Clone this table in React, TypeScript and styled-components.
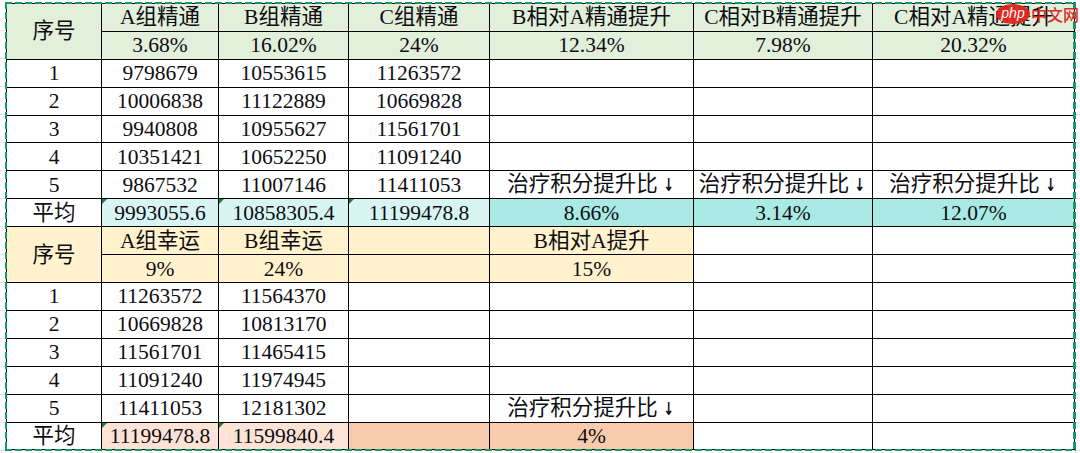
import React from "react";
import styled, { createGlobalStyle, css } from "styled-components";

const GlobalStyle = createGlobalStyle`
  html, body { margin: 0; padding: 0; background: #ffffff; }
  #root { width: 1080px; height: 453px; overflow: hidden; }
`;

const Page = styled.div`
  position: relative;
  width: 1080px;
  height: 453px;
  box-sizing: border-box;
  padding: 3px 0 0 6px;
  background-color: #fff;
  background-image: repeating-linear-gradient(
    180deg,
    transparent 0,
    transparent 27px,
    #e3e3e3 27px,
    #e3e3e3 28px
  );
  background-position: 0 3px;
  font-family: "Liberation Serif", "Noto Sans CJK SC", serif;
  color: #0d0d12;
`;

const Sheet = styled.table`
  border-collapse: collapse;
  table-layout: fixed;
  width: 1068px;
  background: #fff;
`;

const Row = styled.tr`
  height: 27.9px;
`;

type Tone = "white" | "green" | "cyanLight" | "cyan" | "yellow" | "peachLight" | "peach";

const tones: Record<Tone, string> = {
  white: "#ffffff",
  green: "#e2efda",
  cyanLight: "#d8f5f3",
  cyan: "#aaeae4",
  yellow: "#fff2cc",
  peachLight: "#fce3d5",
  peach: "#f8cbad",
};

const Cell = styled.td<{ $tone?: Tone; $mark?: boolean }>`
  position: relative;
  padding: 0;
  border: 1px solid #000;
  background: ${(p) => tones[p.$tone ?? "white"]};
  text-align: center;
  vertical-align: middle;
  font-size: 21.5px;
  line-height: 26px;
  white-space: nowrap;
  overflow: hidden;
  ${(p) =>
    p.$mark &&
    css`
      &::before {
        content: "";
        position: absolute;
        left: 0;
        top: 0;
        border-style: solid;
        border-width: 5px 5px 0 0;
        border-color: #1f7a3c transparent transparent transparent;
      }
    `}
`;

const Arrow = styled.span`
  display: inline-block;
  margin-left: 3px;
  font-family: "DejaVu Sans", sans-serif;
  font-size: 18px;
  font-weight: bold;
  transform: scaleX(0.7);
`;

const Frame = styled.div`
  position: absolute;
  left: 5px;
  top: 2px;
  width: 1071px;
  height: 449px;
  pointer-events: none;
  background:
    linear-gradient(90deg, #15986a 70%, transparent 0) left top / 10px 2px repeat-x,
    linear-gradient(90deg, #15986a 70%, transparent 0) left bottom / 10px 2px repeat-x,
    linear-gradient(180deg, #15986a 70%, transparent 0) left top / 2px 10px repeat-y,
    linear-gradient(180deg, #15986a 70%, transparent 0) right top / 3px 10px repeat-y;
`;

const Watermark = styled.div`
  position: absolute;
  top: 4px;
  left: 996px;
  display: flex;
  align-items: center;
  gap: 1px;
  pointer-events: none;
`;

const PhpBadge = styled.span`
  display: inline-flex;
  align-items: center;
  justify-content: center;
  width: 34px;
  height: 20px;
  border-radius: 50%;
  background: #e1251b;
  color: #fff;
  font-family: "Liberation Sans", Arial, sans-serif;
  font-size: 14px;
  font-style: italic;
  line-height: 1;
  padding-bottom: 2px;
  box-sizing: border-box;
  opacity: 0.95;
`;

const SiteName = styled.span`
  color: #d9221b;
  font-family: "Noto Sans CJK SC", sans-serif;
  font-size: 16px;
  font-weight: 500;
  line-height: 1;
  opacity: 0.95;
`;

const widths = [95, 117, 130, 141, 204, 179, 202];

const Lift = () => (
  <>
    治疗积分提升比<Arrow>↓</Arrow>
  </>
);

const upperData = [
  ["1", "9798679", "10553615", "11263572"],
  ["2", "10006838", "11122889", "10669828"],
  ["3", "9940808", "10955627", "11561701"],
  ["4", "10351421", "10652250", "11091240"],
];

const lowerData = [
  ["1", "11263572", "11564370"],
  ["2", "10669828", "10813170"],
  ["3", "11561701", "11465415"],
  ["4", "11091240", "11974945"],
];

export default function App() {
  return (
    <>
      <GlobalStyle />
      <Page>
        <Sheet>
          <colgroup>
            {widths.map((w, i) => (
              <col key={i} style={{ width: w }} />
            ))}
          </colgroup>
          <tbody>
            <Row>
              <Cell $tone="green" rowSpan={2}>序号</Cell>
              <Cell $tone="green">A组精通</Cell>
              <Cell $tone="green">B组精通</Cell>
              <Cell $tone="green">C组精通</Cell>
              <Cell $tone="green">B相对A精通提升</Cell>
              <Cell $tone="green">C相对B精通提升</Cell>
              <Cell $tone="green">C相对A精通提升</Cell>
            </Row>
            <Row>
              <Cell $tone="green">3.68%</Cell>
              <Cell $tone="green">16.02%</Cell>
              <Cell $tone="green">24%</Cell>
              <Cell $tone="green">12.34%</Cell>
              <Cell $tone="green">7.98%</Cell>
              <Cell $tone="green">20.32%</Cell>
            </Row>
            {upperData.map((r) => (
              <Row key={r[0]}>
                {r.map((v, i) => (
                  <Cell key={i}>{v}</Cell>
                ))}
                <Cell />
                <Cell />
                <Cell />
              </Row>
            ))}
            <Row>
              <Cell>5</Cell>
              <Cell>9867532</Cell>
              <Cell>11007146</Cell>
              <Cell>11411053</Cell>
              <Cell><Lift /></Cell>
              <Cell><Lift /></Cell>
              <Cell><Lift /></Cell>
            </Row>
            <Row>
              <Cell>平均</Cell>
              <Cell $tone="cyanLight" $mark>9993055.6</Cell>
              <Cell $tone="cyanLight" $mark>10858305.4</Cell>
              <Cell $tone="cyanLight" $mark>11199478.8</Cell>
              <Cell $tone="cyan">8.66%</Cell>
              <Cell $tone="cyan">3.14%</Cell>
              <Cell $tone="cyan">12.07%</Cell>
            </Row>
            <Row>
              <Cell $tone="yellow" rowSpan={2}>序号</Cell>
              <Cell $tone="yellow">A组幸运</Cell>
              <Cell $tone="yellow">B组幸运</Cell>
              <Cell $tone="yellow" />
              <Cell $tone="yellow">B相对A提升</Cell>
              <Cell />
              <Cell />
            </Row>
            <Row>
              <Cell $tone="yellow">9%</Cell>
              <Cell $tone="yellow">24%</Cell>
              <Cell $tone="yellow" />
              <Cell $tone="yellow">15%</Cell>
              <Cell />
              <Cell />
            </Row>
            {lowerData.map((r) => (
              <Row key={r[0]}>
                {r.map((v, i) => (
                  <Cell key={i}>{v}</Cell>
                ))}
                <Cell />
                <Cell />
                <Cell />
                <Cell />
              </Row>
            ))}
            <Row>
              <Cell>5</Cell>
              <Cell>11411053</Cell>
              <Cell>12181302</Cell>
              <Cell />
              <Cell><Lift /></Cell>
              <Cell />
              <Cell />
            </Row>
            <Row>
              <Cell>平均</Cell>
              <Cell $tone="peachLight" $mark>11199478.8</Cell>
              <Cell $tone="peachLight" $mark>11599840.4</Cell>
              <Cell $tone="peach" />
              <Cell $tone="peach">4%</Cell>
              <Cell />
              <Cell />
            </Row>
          </tbody>
        </Sheet>
        <Frame />
        <Watermark>
          <PhpBadge>php</PhpBadge>
          <SiteName>中文网</SiteName>
        </Watermark>
      </Page>
    </>
  );
}
